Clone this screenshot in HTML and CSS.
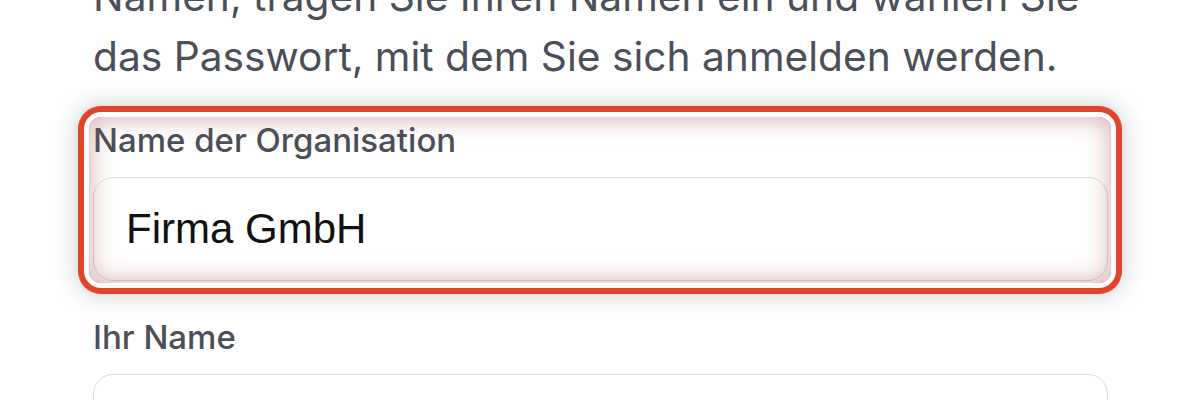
FILE: index.html
```html
<!DOCTYPE html>
<html lang="de">
<head>
<meta charset="utf-8">
<title>Organisation anlegen</title>
<link rel="stylesheet" href="styles.css">
</head>
<body>
<main class="page">
  <p class="intro">Namen, tragen Sie Ihren Namen ein und wählen Sie das Passwort, mit dem Sie sich anmelden werden.</p>
  <div class="field field-highlight">
    <label class="field-label" for="org">Name der Organisation</label>
    <input class="field-input" id="org" type="text" value="Firma GmbH">
    <span class="highlight-ring" aria-hidden="true"></span>
  </div>
  <div class="field">
    <label class="field-label" for="name">Ihr Name</label>
    <input class="field-input" id="name" type="text" value="">
  </div>
</main>
</body>
</html>
```

FILE: styles.css
```css
html, body {
  margin: 0;
  padding: 0;
  background: #ffffff;
}

body {
  font-family: Inter, "Noto Sans", sans-serif;
  overflow: hidden;
  height: 400px;
}

.page {
  width: 1015px;
  padding-left: 93px;
  margin-top: -33px;
}

.intro {
  margin: 0;
  font-size: 40.7px;
  line-height: 60px;
  color: #4b4f58;
  font-weight: 400;
}

.field {
  display: flex;
  flex-direction: column;
  gap: 15px;
  position: relative;
}

.field-highlight {
  margin-top: 31px;
}

.field + .field {
  margin-top: 34px;
}

.field-label {
  display: block;
  font-size: 33px;
  line-height: 44px;
  font-weight: 500;
  color: #4b4f58;
}

.field-input {
  box-sizing: border-box;
  width: 100%;
  height: 104px;
  margin: 0;
  padding: 0 32px;
  border: 1.5px solid #dcdcdc;
  border-radius: 20px;
  background: #ffffff;
  font-family: "Liberation Sans", Arial, sans-serif;
  font-size: 42px;
  color: #111111;
  outline: none;
}

.highlight-ring {
  position: absolute;
  top: -1px;
  left: -4px;
  right: -3px;
  bottom: -2px;
  border-radius: 12px;
  pointer-events: none;
  box-shadow:
    inset 0 0 22px 3px rgba(160, 90, 80, 0.42),
    0 0 0 5px #ffffff,
    0 0 0 11px #e0452a,
    0 0 22px 13px rgba(0, 0, 0, 0.18);
}
```
